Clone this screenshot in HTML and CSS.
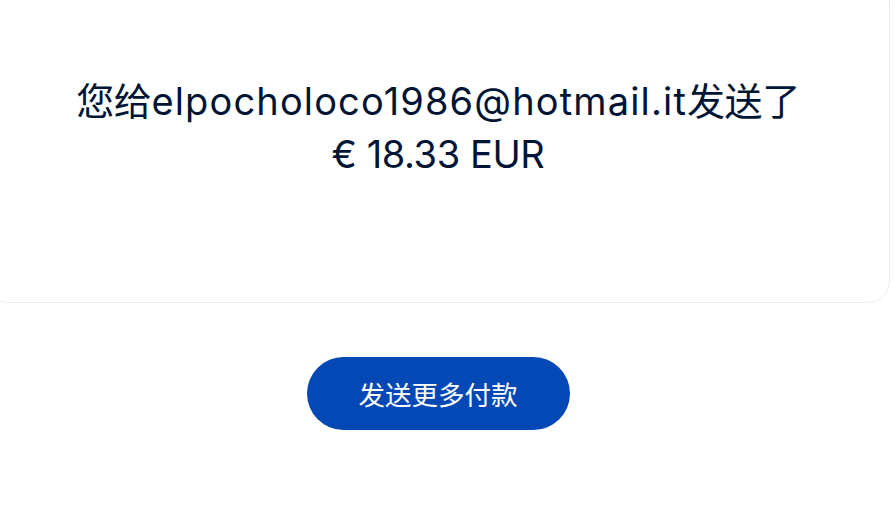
FILE: index.html
```html
<!DOCTYPE html>
<html lang="zh">
<head>
<meta charset="utf-8">
<link rel="stylesheet" href="styles.css">
</head>
<body>
<div class="page">
  <section class="card">
    <h1 class="msg">您给<span class="email">elpocholoco1986@hotmail.it</span>发送了<br>€ 18.33 EUR</h1>
  </section>
  <div class="actions">
    <button class="btn">发送更多付款</button>
  </div>
</div>
</body>
</html>
```

FILE: styles.css
```css
html, body {
  margin: 0;
  padding: 0;
  background: #ffffff;
  overflow: hidden;
}
body {
  font-family: "Inter", "Noto Sans CJK SC", sans-serif;
  color: #001435;
}
.page {
  width: 904px;
  margin-left: -14px;
  margin-top: -20px;
}
.card {
  box-sizing: border-box;
  height: 323px;
  border: 1px solid #ececec;
  border-radius: 22px;
  padding-top: 94px;
  text-align: center;
}
.msg {
  margin: 0;
  font-size: 38px;
  font-weight: 400;
  line-height: 53px;
  letter-spacing: -0.4px;
}
.email {
  letter-spacing: 1.15px;
}
.actions {
  display: flex;
  justify-content: center;
  padding-top: 54px;
}
.btn {
  width: 263px;
  height: 73px;
  border: none;
  border-radius: 37px;
  background: #0448b5;
  color: #ffffff;
  font-family: "Inter", "Noto Sans CJK SC", sans-serif;
  font-size: 26.5px;
  font-weight: 400;
}
```
